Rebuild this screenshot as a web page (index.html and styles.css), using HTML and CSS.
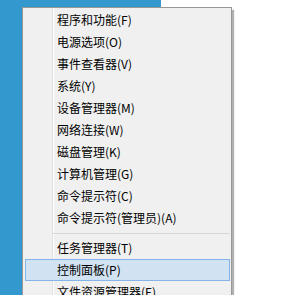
FILE: index.html
```html
<!DOCTYPE html>
<html lang="zh-CN">
<head>
<meta charset="utf-8">
<title>菜单</title>
<link rel="stylesheet" href="styles.css">
</head>
<body>
<div class="desktop">
  <div class="backdrop"></div>
  <div class="menu">
    <ul class="group">
      <li class="item">程序和功能(F)</li>
      <li class="item">电源选项(O)</li>
      <li class="item">事件查看器(V)</li>
      <li class="item">系统(Y)</li>
      <li class="item">设备管理器(M)</li>
      <li class="item">网络连接(W)</li>
      <li class="item">磁盘管理(K)</li>
      <li class="item">计算机管理(G)</li>
      <li class="item">命令提示符(C)</li>
      <li class="item">命令提示符(管理员)(A)</li>
    </ul>
    <div class="sep"></div>
    <ul class="group">
      <li class="item">任务管理器(T)</li>
      <li class="item active">控制面板(P)</li>
      <li class="item">文件资源管理器(E)</li>
    </ul>
  </div>
</div>
</body>
</html>
```

FILE: styles.css
```css
html, body {
  margin: 0;
  padding: 0;
  background: #ffffff;
  overflow: hidden;
}

.desktop {
  position: relative;
  width: 299px;
  height: 295px;
  overflow: hidden;
}

.backdrop {
  width: 161px;
  height: 295px;
  background: #3298cd;
}

.menu {
  position: absolute;
  left: 22px;
  top: 7px;
  width: 208px;
  height: 320px;
  padding-top: 1px;
  background: #f0f0f0;
  border: 1px solid #979797;
  box-shadow: 2px 3px 1px rgba(0, 0, 0, 0.3);
  font-family: "Noto Sans CJK SC", "Noto Sans", sans-serif;
  font-size: 12px;
  color: #000000;
  background-image: linear-gradient(to right, transparent 29px, #e0e0e0 29px, #e0e0e0 30px, #ffffff 30px, #ffffff 31px, transparent 31px);
}

.group {
  list-style: none;
  margin: 0;
  padding: 0;
}

.item {
  height: 22px;
  line-height: 22px;
  margin: 0 1px 0 2px;
  padding-left: 32px;
  box-sizing: border-box;
  white-space: nowrap;
}

.item.active {
  background: #d1e3f3;
  border: 1px solid #84b4e8;
  line-height: 20px;
  padding-left: 31px;
}

.sep {
  height: 1px;
  margin: 4px 1px 3px 29px;
  background: #d7d7d7;
}
```
